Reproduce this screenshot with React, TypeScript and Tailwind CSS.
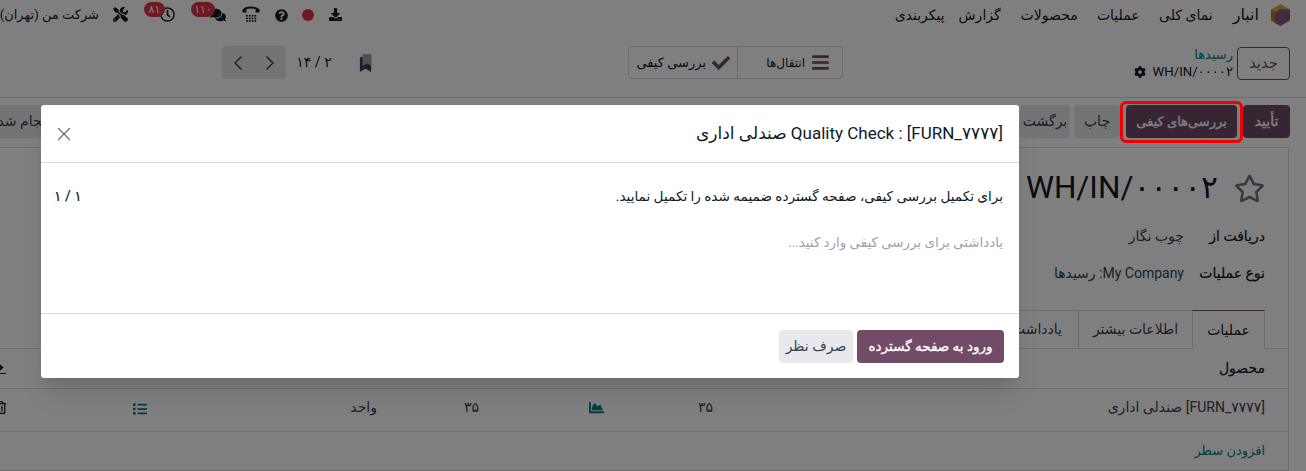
import React from "react";
import { FaBars, FaCheck, FaRegStar, FaCog, FaDownload, FaQuestionCircle, FaComments, FaTools, FaRegTrashAlt, FaList, FaChartArea, FaBookmark, FaRegClock } from "react-icons/fa";
import { ChevronLeft, ChevronRight, X } from "lucide-react";

function Logo() {
  return (
    <svg width="19" height="22" viewBox="0 0 19 22">
      <path d="M9.5 0 L19 5.5 L9.5 11 L0 5.5Z" fill="#e0a63b" />
      <path d="M0 5.5 L0 16.5 L9.5 22 L9.5 11Z" fill="#c9701f" />
      <path d="M4 8 L9.5 5 L19 5.5 L19 16.5 L9.5 22 L4 19Z" fill="#875a7b" />
    </svg>
  );
}

function Tty({ className }: { className: string }) {
  const dots: React.ReactNode[] = [];
  for (let r = 0; r < 3; r++) for (let c = 0; c < 4; c++) dots.push(<rect key={r + "-" + c} x={4 + c * 2.8} y={10 + r * 2.6} width="1.8" height="1.6" fill="currentColor" />);
  return (
    <svg className={className} width="18" height="20" viewBox="0 0 18 20">
      <path d="M1 5.5 C4 1.5 14 1.5 17 5.5" fill="none" stroke="currentColor" strokeWidth="1.8" />
      <rect x="0.5" y="4.5" width="4" height="3" rx="0.6" fill="currentColor" />
      <rect x="13.5" y="4.5" width="4" height="3" rx="0.6" fill="currentColor" />
      {dots}
    </svg>
  );
}

function Badge({ children, className }: { children: React.ReactNode; className: string }) {
  return <span className={"absolute top-[2px] h-[15px] rounded-full bg-[#dc3545] text-white text-[11px] leading-[14px] flex items-center justify-center " + className}>{children}</span>;
}

export default function App() {
  return (
    <div dir="rtl" className="relative w-[1306px] h-[471px] overflow-hidden bg-white text-[#374151] text-[14px] [font-family:Roboto,'Noto_Sans','DejaVu_Sans',sans-serif]">
      {/* navbar */}
      <div className="h-[30px] flex items-center justify-between pr-[16px] text-[#111827]">
        <div className="flex items-center whitespace-nowrap">
          <Logo />
          <span className="mr-[12px] text-[16px] ml-[20px]">انبار</span>
          <div className="flex items-center gap-[22px] text-[14px]">
            <span className="w-[51px]">نمای کلی</span>
            <span className="w-[40px]">عملیات</span>
            <span className="w-[55px]">محصولات</span>
            <span className="w-[34px]">گزارش</span>
            <span className="w-[50px]">پیکربندی</span>
          </div>
        </div>
        <div className="flex items-center relative w-[345px] h-[30px] text-[#111827]">
          <FaDownload className="absolute left-[329px] top-[8px] text-[13px]" />
          <span className="absolute left-[302px] top-[9px] w-[12px] h-[12px] rounded-full bg-[#dc3545]" />
          <FaQuestionCircle className="absolute left-[275px] top-[9px] text-[13px]" />
          <Tty className="absolute left-[242px] top-[5px]" />
          <FaComments className="absolute left-[210px] top-[7px] text-[16px]" />
          <Badge className="left-[191px] w-[24px]">۱۱۰</Badge>
          <FaRegClock className="absolute left-[160px] top-[7px] text-[15px]" />
          <Badge className="left-[144px] w-[21px]">۸۱</Badge>
          <FaTools className="absolute left-[113px] top-[7px] text-[15px]" />
          <span className="absolute left-0 top-[5px] w-[99px] whitespace-nowrap text-[13px]">شرکت من (تهران)</span>
        </div>
      </div>

      {/* control panel */}
      <div className="h-[68px] border-b border-[#d8dadd] flex items-start pt-[16px] pr-[16px]">
        <div className="w-[447px] flex items-center">
          <button className="h-[33px] w-[53px] border border-[#714b67] rounded-[4px] text-[#714b67] text-[15px]">جدید</button>
          <div className="mr-[4px] flex flex-col leading-[17px]">
            <span className="text-[#017e84] text-[13px]">رسیدها</span>
            <span className="flex items-center gap-[7px] text-[13.2px] text-[#111827]">WH/IN/۰۰۰۰۲ <FaCog className="text-[12px]" /></span>
          </div>
        </div>
        <div className="w-[215px] h-[33px] border border-[#d8dadd] rounded-[4px] flex text-[#111827]">
          <div className="w-[105px] flex items-center pr-[12px] gap-[6px] text-[12px] border-l border-[#d8dadd]"><FaBars className="text-[#714b67] text-[19px]" /><span>انتقال‌ها</span></div>
          <div className="flex-1 flex items-center pr-[7px] gap-[6px] text-[13px]"><FaCheck className="text-[#714b67] text-[18px]" /><span>بررسی کیفی</span></div>
        </div>
        <div className="mr-[255px] flex items-center h-[33px] text-[#111827]">
          <span className="relative w-[12px] h-[18px] text-[#374151]">
            <FaBookmark className="absolute right-0 bottom-0 text-[15px]" />
            <FaBookmark className="absolute left-0 top-0 text-[12px] text-[#a0a3a8]" />
          </span>
          <span className="mr-[28px] w-[38px] text-center text-[14px] whitespace-nowrap">۲ / ۱۴</span>
          <div className="mr-[9px] w-[64px] h-[33px] rounded-[4px] bg-[#e7e9ed] flex items-center justify-around text-[#374151]">
            <ChevronRight size={24} strokeWidth={1.5} />
            <ChevronLeft size={24} strokeWidth={1.5} />
          </div>
        </div>
      </div>

      {/* action row */}
      <div className="h-[49px] pr-[16px] pt-[7px] flex gap-[6px] text-[14px] whitespace-nowrap">
        <button className="shrink-0 h-[33px] w-[47px] rounded-[4px] bg-[#714b67] text-white [-webkit-text-stroke:0.3px]">تأیید</button>
        <button className="shrink-0 h-[33px] w-[111px] rounded-[4px] bg-[#714b67] text-white text-[13px] [-webkit-text-stroke:0.3px]">بررسی‌های کیفی</button>
        <button className="shrink-0 h-[33px] w-[46px] rounded-[4px] bg-[#e7e9ed]">چاپ</button>
        <button className="shrink-0 h-[33px] w-[50px] rounded-[4px] bg-[#e7e9ed] mr-[-2px]">برگشت</button>
        <button className="shrink-0 h-[33px] w-[90px] rounded-[4px] bg-[#e7e9ed] mr-[949px]">انجام شده</button>
      </div>

      {/* sheet */}
      <div className="mr-[17px] w-[1400px] border-r border-t border-[#d8dadd] pr-[23px] pt-[23px]">
        <div className="flex items-center h-[34px] gap-[16px]">
          <FaRegStar className="text-[31px] text-[#6b7280]" />
          <span className="text-[31.5px] leading-none text-[#111827]">WH/IN/۰۰۰۰۲</span>
        </div>
        <div className="mt-[19px] flex h-[37px] items-start text-[14px]">
          <span className="w-[81px] text-[#111827] leading-[24px] [-webkit-text-stroke:0.2px]">دریافت از</span>
          <span className="leading-[24px]">چوب نگار</span>
        </div>
        <div className="flex h-[37px] items-start text-[14px]">
          <span className="w-[81px] text-[#111827] leading-[24px] [-webkit-text-stroke:0.2px]">نوع عملیات</span>
          <span className="leading-[24px]">My Company: رسیدها</span>
        </div>
        <div className="flex h-[39px] text-[14px] border-b border-[#d8dadd] mr-[-23px] pr-[23px] mt-[12px]">
          <div className="w-[73px] h-[39px] flex items-center justify-center border border-b-0 border-[#d8dadd] border-t-[#714b67] bg-white text-[#111827]">عملیات</div>
          <div className="w-[114px] flex items-center justify-center border-l border-t border-[#d8dadd]">اطلاعات بیشتر</div>
          <div className="w-[120px] flex items-center justify-start pr-[16px] border-l border-t border-[#d8dadd]">یادداشت‌ها</div>
        </div>
        <div className="h-[40px] flex items-center border-b border-[#d8dadd] mr-[-23px] pr-[23px] text-[#111827]">
          <span className="w-[1259px] [-webkit-text-stroke:0.2px]">محصول</span>
          <svg width="14" height="12" viewBox="0 0 14 12" className="text-[#111827]">
            <path d="M1 4.5h9M7 1.5l3.5 3-3.5 3" fill="none" stroke="currentColor" strokeWidth="1.6" />
            <path d="M0 10.5h14" stroke="currentColor" strokeWidth="1" />
          </svg>
        </div>
        <div className="h-[43px] flex items-center border-b border-[#d8dadd] mr-[-23px] pr-[23px] pb-[6px]">
          <span className="w-[552px]">[FURN_۷۷۷۷] صندلی اداری</span>
          <span className="w-[109px]">۳۵</span>
          <span className="w-[125px]"><FaChartArea className="text-[#017e84] text-[15px]" /></span>
          <span className="w-[102px]">۳۵</span>
          <span className="w-[230px]">واحد</span>
          <span className="w-[140px] pt-[4px]"><FaList className="text-[#017e84] text-[14px]" /></span>
          <FaRegTrashAlt className="text-[13px] text-[#111827]" />
        </div>
        <div className="h-[39px] flex items-center border-b border-[#d8dadd] mr-[-23px] pr-[23px] text-[#017e84] text-[13px]">افزودن سطر</div>
      </div>

      {/* overlay */}
      <div className="absolute inset-0 bg-black/50" />

      {/* highlight */}
      <div className="absolute left-[1120px] top-[101px] w-[123px] h-[42px] rounded-[6px] border-[3px] border-[#f00000]" />

      {/* modal */}
      <div className="absolute left-[41px] top-[105px] w-[978px] h-[273px] bg-white rounded-[3px] shadow-xl flex flex-col text-[#374151]">
        <div className="h-[58px] border-b border-[#d8dadd] flex items-center justify-between pr-[16px] pl-[12px]">
          <span className="text-[17px] text-[#111827]">Quality Check : [FURN_۷۷۷۷] صندلی اداری</span>
          <X size={22} strokeWidth={1.5} className="text-[#6b7280]" />
        </div>
        <div className="h-[151px] border-b border-[#d8dadd] pr-[16px] pl-[13px] pt-[23px]">
          <div className="flex justify-between text-[#111827]">
            <span className="text-[13.6px]">برای تکمیل بررسی کیفی، صفحه گسترده ضمیمه شده را تکمیل نمایید.</span>
            <span className="[-webkit-text-stroke:0.2px]">۱ / ۱</span>
          </div>
          <div className="mt-[26px] text-[#9ca3af] text-[13.4px]">یادداشتی برای بررسی کیفی وارد کنید...</div>
        </div>
        <div className="flex-1 flex items-center gap-[4px] pr-[15px] whitespace-nowrap">
          <button className="h-[33px] w-[147px] rounded-[4px] bg-[#714b67] text-white text-[13.5px] [-webkit-text-stroke:0.3px]">ورود به صفحه گسترده</button>
          <button className="h-[33px] w-[74px] rounded-[4px] bg-[#e7e9ed]">صرف نظر</button>
        </div>
      </div>
    </div>
  );
}
